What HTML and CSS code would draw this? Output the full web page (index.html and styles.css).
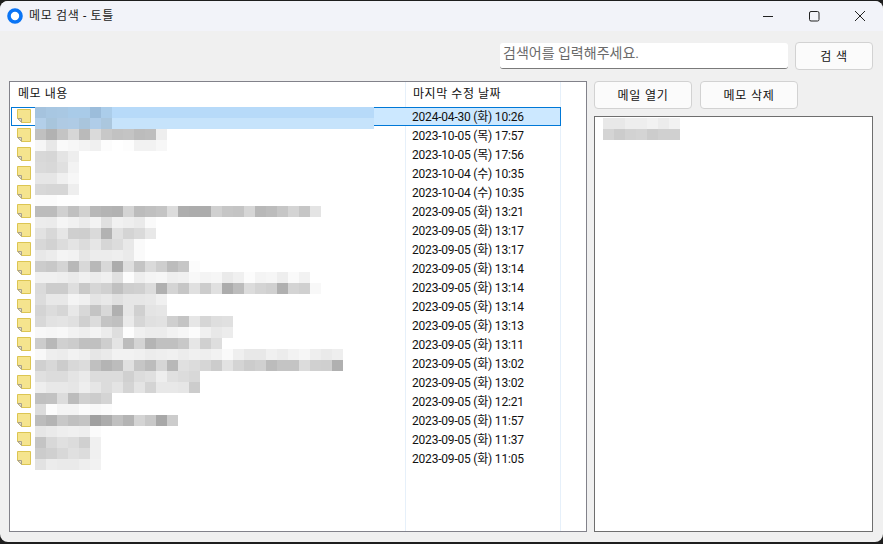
FILE: index.html
```
<!DOCTYPE html>
<html lang="ko">
<head>
<meta charset="utf-8">
<title>메모 검색 - 토틀</title>
<link rel="stylesheet" href="styles.css">
</head>
<body>
<svg class="sprite" width="0" height="0" aria-hidden="true">
  <symbol id="note" viewBox="0 0 14 14">
    <path d="M.5.5h13v13H4.5L.5 9.5z" fill="#f5e48e" stroke="#dcc552"/>
    <path d="M.8 9.5h3.7v3.7z" fill="#e8e2c4" stroke="#a8a08a" stroke-width="1"/>
  </symbol>
</svg>
<div class="window">
  <header class="titlebar">
    <svg class="app-icon" viewBox="0 0 16 16" aria-hidden="true"><circle cx="8" cy="8" r="6" fill="#fff" stroke="#0a74f5" stroke-width="3.6"/></svg>
    <span class="app-title">메모 검색 - 토틀</span>
    <div class="caption">
      <svg class="cap-btn" viewBox="0 0 46 30" aria-hidden="true"><path d="M18 15.5h10" stroke="#222" fill="none"/></svg>
      <svg class="cap-btn" viewBox="0 0 46 30" aria-hidden="true"><rect x="18.5" y="10.5" width="9.5" height="9.5" rx="1.5" stroke="#222" fill="none"/></svg>
      <svg class="cap-btn" viewBox="0 0 46 30" aria-hidden="true"><path d="M18 10l10 10M28 10L18 20" stroke="#222" fill="none"/></svg>
    </div>
  </header>
  <main class="client">
    <div class="toolbar">
      <div class="search-input">검색어를 입력해주세요.</div>
      <button class="btn btn-search">검 색</button>
    </div>
    <div class="panes">
      <section class="list">
        <div class="mosaic mosaic-list" data-mosaic="list"></div>
        <div class="row list-head"><div class="cell-name">메모 내용</div><div class="cell-date">마지막 수정 날짜</div></div>
        <div class="row selected"><div class="cell-icon"><svg class="note"><use href="#note"/></svg></div><div class="cell-text"></div><div class="cell-date">2024-04-30 (화) 10:26</div></div>
        <div class="row"><div class="cell-icon"><svg class="note"><use href="#note"/></svg></div><div class="cell-text"></div><div class="cell-date">2023-10-05 (목) 17:57</div></div>
        <div class="row"><div class="cell-icon"><svg class="note"><use href="#note"/></svg></div><div class="cell-text"></div><div class="cell-date">2023-10-05 (목) 17:56</div></div>
        <div class="row"><div class="cell-icon"><svg class="note"><use href="#note"/></svg></div><div class="cell-text"></div><div class="cell-date">2023-10-04 (수) 10:35</div></div>
        <div class="row"><div class="cell-icon"><svg class="note"><use href="#note"/></svg></div><div class="cell-text"></div><div class="cell-date">2023-10-04 (수) 10:35</div></div>
        <div class="row"><div class="cell-icon"><svg class="note"><use href="#note"/></svg></div><div class="cell-text"></div><div class="cell-date">2023-09-05 (화) 13:21</div></div>
        <div class="row"><div class="cell-icon"><svg class="note"><use href="#note"/></svg></div><div class="cell-text"></div><div class="cell-date">2023-09-05 (화) 13:17</div></div>
        <div class="row"><div class="cell-icon"><svg class="note"><use href="#note"/></svg></div><div class="cell-text"></div><div class="cell-date">2023-09-05 (화) 13:17</div></div>
        <div class="row"><div class="cell-icon"><svg class="note"><use href="#note"/></svg></div><div class="cell-text"></div><div class="cell-date">2023-09-05 (화) 13:14</div></div>
        <div class="row"><div class="cell-icon"><svg class="note"><use href="#note"/></svg></div><div class="cell-text"></div><div class="cell-date">2023-09-05 (화) 13:14</div></div>
        <div class="row"><div class="cell-icon"><svg class="note"><use href="#note"/></svg></div><div class="cell-text"></div><div class="cell-date">2023-09-05 (화) 13:14</div></div>
        <div class="row"><div class="cell-icon"><svg class="note"><use href="#note"/></svg></div><div class="cell-text"></div><div class="cell-date">2023-09-05 (화) 13:13</div></div>
        <div class="row"><div class="cell-icon"><svg class="note"><use href="#note"/></svg></div><div class="cell-text"></div><div class="cell-date">2023-09-05 (화) 13:11</div></div>
        <div class="row"><div class="cell-icon"><svg class="note"><use href="#note"/></svg></div><div class="cell-text"></div><div class="cell-date">2023-09-05 (화) 13:02</div></div>
        <div class="row"><div class="cell-icon"><svg class="note"><use href="#note"/></svg></div><div class="cell-text"></div><div class="cell-date">2023-09-05 (화) 13:02</div></div>
        <div class="row"><div class="cell-icon"><svg class="note"><use href="#note"/></svg></div><div class="cell-text"></div><div class="cell-date">2023-09-05 (화) 12:21</div></div>
        <div class="row"><div class="cell-icon"><svg class="note"><use href="#note"/></svg></div><div class="cell-text"></div><div class="cell-date">2023-09-05 (화) 11:57</div></div>
        <div class="row"><div class="cell-icon"><svg class="note"><use href="#note"/></svg></div><div class="cell-text"></div><div class="cell-date">2023-09-05 (화) 11:37</div></div>
        <div class="row"><div class="cell-icon"><svg class="note"><use href="#note"/></svg></div><div class="cell-text"></div><div class="cell-date">2023-09-05 (화) 11:05</div></div>
      </section>
      <aside class="side">
        <div class="side-buttons">
          <button class="btn btn-side">메일 열기</button>
          <button class="btn btn-side">메모 삭제</button>
        </div>
        <div class="detail">
          <div class="mosaic" data-mosaic="detail"></div>
        </div>
      </aside>
    </div>
  </main>
</div>
<script src="mosaic.js"></script>
</body>
</html>
```

FILE: styles.css
```
* { box-sizing: border-box; }
html, body { margin: 0; height: 100%; }
body {
  background: #1e1e1e;
  font-family: Roboto, "Noto Sans CJK KR", sans-serif;
  font-size: 12px;
  color: #111;
  overflow: hidden;
}
.sprite { position: absolute; }
.window {
  margin-top: 1px;
  height: 541px;
  display: flex;
  flex-direction: column;
  background: #f0f0f0;
  border-radius: 8px;
  overflow: hidden;
}
.titlebar {
  height: 30px;
  flex: none;
  display: flex;
  align-items: center;
  background: #f2f3f9;
  padding-left: 7px;
}
.app-icon { width: 16px; height: 16px; }
.app-title { margin-left: 6px; color: #1a1a1a; line-height: 16px; letter-spacing: .65px; }
.caption { margin-left: auto; display: flex; }
.cap-btn { width: 46px; height: 30px; display: block; }
.client {
  flex: 1;
  display: flex;
  flex-direction: column;
  padding: 11px 10px 10px 9px;
  gap: 11px;
  min-height: 0;
}
.toolbar { display: flex; justify-content: flex-end; align-items: center; gap: 7px; }
.search-input {
  width: 288px;
  height: 26px;
  background: #fff;
  border-bottom: 1px solid #7a7a7a;
  border-radius: 3px;
  color: #6a6a6a;
  font-size: 14px;
  line-height: 20px;
  padding-left: 3px;
}
.btn {
  font: inherit;
  height: 28px;
  background: #fbfbfb;
  border: 1px solid #d2d2d2;
  border-radius: 4px;
  color: #111;
  padding: 0 0 2px;
  letter-spacing: .8px;
}
.btn-search { width: 78px; }
.btn-side { width: 98px; }
.panes { flex: 1; display: flex; gap: 7px; min-height: 0; }
.list {
  position: relative;
  width: 578px;
  border: 1px solid #82828a;
  background-color: #fff;
  background-image: linear-gradient(#e6f0fa, #e6f0fa), linear-gradient(#e6f0fa, #e6f0fa);
  background-size: 1px 100%;
  background-repeat: no-repeat;
  background-position: 395px 0, 550px 0;
}
.row {
  display: flex;
  height: 19px;
  width: 550px;
  margin-left: 1px;
  line-height: 20px;
}
.list-head { height: 25px; line-height: 25px; letter-spacing: .55px; }
.list-head .cell-name { width: 394px; padding-left: 7px; }
.list-head .cell-date { padding-left: 8px; letter-spacing: .55px; }
.cell-icon { width: 24px; flex: none; padding: 2px 0 0 6px; }
.cell-text { width: 370px; flex: none; }
.cell-date { padding-left: 7px; white-space: nowrap; color: #111; letter-spacing: -.2px; }
.note { width: 14px; height: 14px; display: block; }
.selected { box-shadow: inset 0 0 0 1px #0078d7; background: #cce8ff; }
.selected .cell-icon { background: #fff; margin: 1px 0 1px 1px; width: 23px; padding: 1px 0 0 5px; }
.mosaic { display: flex; flex-direction: column; }
.mosaic-list { position: absolute; left: 25px; top: 25px; z-index: 1; }
.mosaic-row { display: flex; height: 11px; }
.mosaic-cell { width: 11px; height: 11px; flex: none; }
.side { flex: 1; display: flex; flex-direction: column; gap: 7px; min-width: 0; }
.side-buttons { display: flex; gap: 8px; }
.detail {
  flex: 1;
  background: #fff;
  border: 1px solid #6e6e6e;
  padding: 1px 0 0 8px;
}
```

FILE: mosaic.js
```
var MOSAICS = {
  list: [
    "a5c3de a8c7e2 a9c8e3 a9cbe8 a9cbe8 9cbddb abcdea b7daf9:262",
    "b3cfe9 a8c5dc afcae3 afcbe5 a9c5dc b0cde9 abc7de c6e3fb:262",
    "c0 b2 c4 d6 ba da c8 c2 c4 bc be ee",
    "f6 e8 fa f7 f3 f0 fc ff fd f2 f2 f7",
    "d8 d6 e4 ee",
    "da d8 e0 f3",
    "e6 e6 f0 f7",
    "d8 d6 d6 ee",
    "fb fb fe fe",
    "bc bc d0 c0 d0 b8 b4 b2 d4 bc c0 c4 dc ae ac ac d0 c6 c4 d6 b8 bc c6 d4 c6 e4",
    "ec eb f5 f1 ea f3 e0 f1 ee ea fa",
    "e2 d8 e6 cf ce da b2 e0 d4 da e8",
    "d8 d2 dc e4 dc e6 d6 dc e8 fa",
    "e8 ec f4 f2 e6 ec ec ee ea fa",
    "cc c8 d4 b8 d8 b8 d8 ac de c4 da ce bc c6 fc",
    "f0 f0 ee ea f0 ec f0 e0 fc ee f4 f6 ee f0 f8 f4 f6 ea f0 fc f4 f6 ee fa f2",
    "da cc cc de c8 d6 d0 c0 ce d0 dc b0 d4 c6 e0 cc e0 ac bc dc d4 d0 b0 d4 d0 f8",
    "dc e8 e8 f4 f0 e4 e8 e0 e6 e6 e8 f0",
    "d4 dc d6 e8 d8 c4 d8 b0 e6 d0 e4 e6",
    "d8 e2 e4 e0 d0 dc c4 c0 ea d6 e0 e2 cf c4 e6 d6 de e0",
    "f8 f6 f8 f2 ee f4 ec de fd f0 ec ec f2 f6 fc f0 e8 ec",
    "cc b8 d0 cc c0 c0 ce e4 bc d4 b4 c0 c0 c8 e6 d0 de",
    "f8 ee ec f2 ee e6 ea f2 f2 f0 ec ee f0 ec f0 ee f2 fa ef e8 e8 f0 ec f2 f6 ee ea ee",
    "d0 d8 cc d8 dc c0 b4 bc e0 c6 bc d6 b8 e0 dc d6 cc e2 d4 cc d0 bc c4 c4 dc d0 cf b0",
    "e0 dc dc e4 ea dc dc dc d0 dc e0 ee e0 dc d8",
    "ee e8 e8 e6 ee e6 dc e4 d4 e4 d4 e8 e8 e6 cc",
    "c0 c2 dc bc d0 cc d4",
    "dc fc f4 f4 fb f8 fb",
    "bc b4 c8 c0 c4 a0 ac c0 b4 d4 c8 a8 cc",
    "e6 ea ee f0 ee fb",
    "c4 d8 e0 dc d0 f0",
    "cc d0 d8 e0 dc f0",
    "e2 ec ea ea ee f2"
  ],
  detail: [
    "e8 e8 ee ee f2 ec f2",
    "d4 cc d2 d4 cc d0 d0"
  ]
};

document.querySelectorAll("[data-mosaic]").forEach(function (box) {
  MOSAICS[box.dataset.mosaic].forEach(function (line) {
    var row = document.createElement("div");
    row.className = "mosaic-row";
    line.split(" ").forEach(function (token) {
      var parts = token.split(":");
      var cell = document.createElement("div");
      cell.className = "mosaic-cell";
      var c = parts[0];
      cell.style.background = "#" + (c.length === 2 ? c + c + c : c);
      if (parts[1]) cell.style.width = parts[1] + "px";
      row.appendChild(cell);
    });
    box.appendChild(row);
  });
});
```
